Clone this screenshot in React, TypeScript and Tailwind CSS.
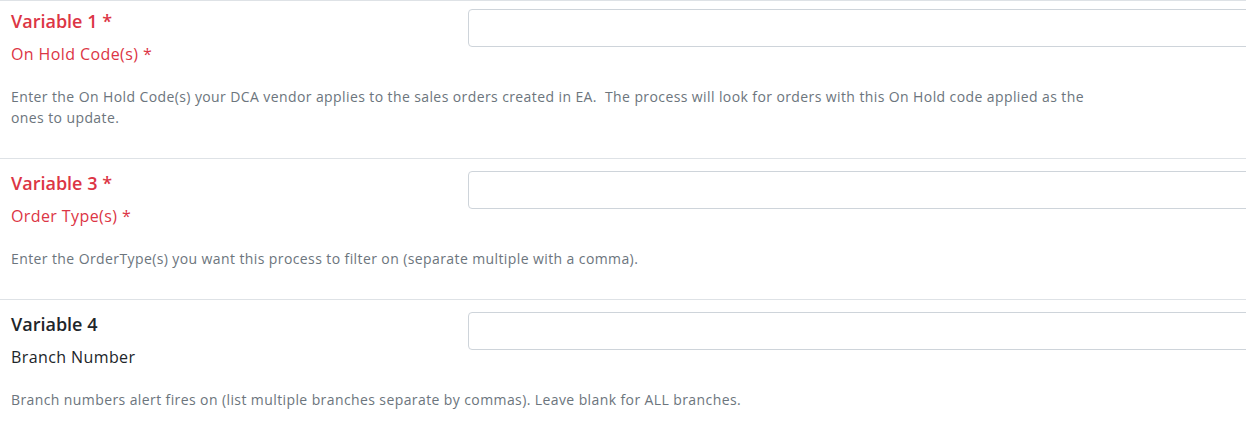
import React from 'react';

interface Field {
  id: string;
  title: string;
  label: string;
  required: boolean;
  help: string;
}

const fields: Field[] = [
  {
    id: 'var1',
    title: 'Variable 1',
    label: 'On Hold Code(s)',
    required: true,
    help: 'Enter the On Hold Code(s) your DCA vendor applies to the sales orders created in EA.\u00a0 The process will look for orders with this On Hold code applied as the ones to update.',
  },
  {
    id: 'var3',
    title: 'Variable 3',
    label: 'Order Type(s)',
    required: true,
    help: 'Enter the OrderType(s) you want this process to filter on (separate multiple with a comma).',
  },
  {
    id: 'var4',
    title: 'Variable 4',
    label: 'Branch Number',
    required: false,
    help: 'Branch numbers alert fires on (list multiple branches separate by commas). Leave blank for ALL branches.',
  },
];

const FieldRow: React.FC<{ field: Field; first: boolean }> = ({ field, first }) => {
  const color = field.required ? 'text-[#dc3545]' : 'text-[#212529]';
  return (
    <div className={`border-t border-[#dee2e6] pb-[30px] ${first ? 'pt-2' : 'pt-3'}`}>
      <div className="flex">
        <div className="w-[468px] pl-[11px] shrink-0">
          <div className={`text-[18px] font-semibold leading-[24px] ${color}`}>
            {field.title}{field.required && ' *'}
          </div>
          <div className={`mt-[9px] text-[16px] leading-[24px] tracking-[0.4px] ${color}`}>
            {field.label}{field.required && ' *'}
          </div>
        </div>
        <div className="flex-1">
          <input
            type="text"
            className="block w-full h-[38px] rounded-[4px] border border-[#ced4da] bg-white px-3 outline-none"
          />
        </div>
      </div>
      <p className="mt-[20px] pl-[11px] w-[1110px] text-[14px] leading-[21px] tracking-[0.4px] text-[#6c757d]">
        {field.help}
      </p>
    </div>
  );
};

export default function App() {
  return (
    <div className="w-full h-[427px] overflow-hidden bg-white" style={{ fontFamily: '"Open Sans", "Noto Sans", sans-serif' }}>
      <div className="w-[1300px]">
        {fields.map((f, i) => (
          <FieldRow key={f.id} field={f} first={i === 0} />
        ))}
      </div>
    </div>
  );
}
